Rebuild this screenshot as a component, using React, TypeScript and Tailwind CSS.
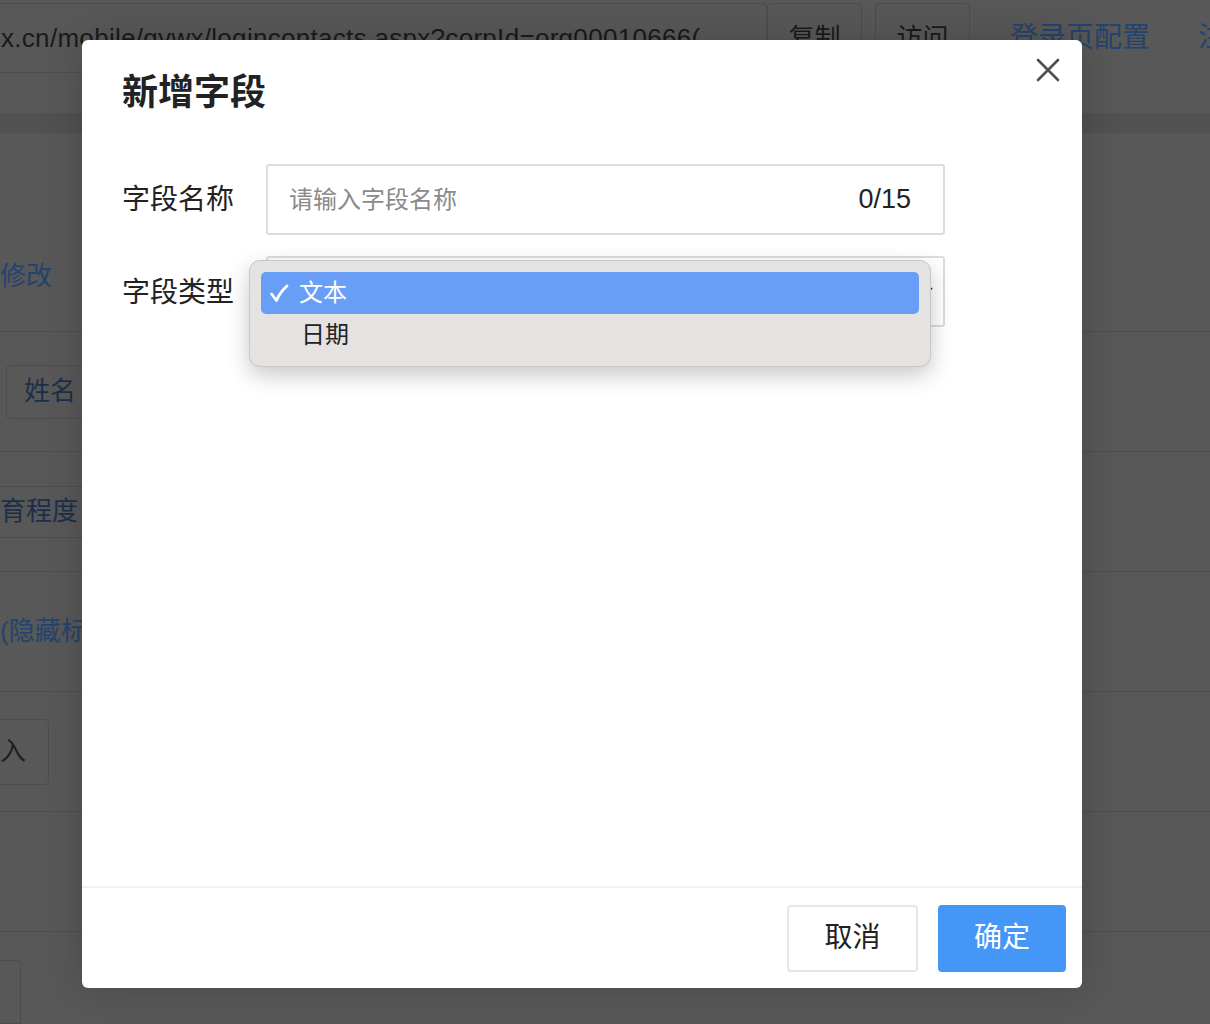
import React from "react";

const F = "font-['Liberation_Sans','Noto_Sans_CJK_SC',sans-serif]";

function BgRow({ h, children }: { h: string; children?: React.ReactNode }) {
  return <div className={`${h} border-b border-[#4f4f4f] flex items-center relative`}>{children}</div>;
}

export default function App() {
  return (
    <div className={`relative w-[1210px] h-[1024px] overflow-hidden bg-[#585858] ${F}`}>
      {/* underlying page */}
      <div className="flex flex-col">
        <div className="h-[73px] flex items-stretch pt-[3px]">
          <div className="shrink-0 w-[787px] -ml-[20px] border border-[#4d4d4d] rounded-[4px] flex items-center pl-[20px] text-[26px] tracking-[0.3px] text-[#1a1a1a] overflow-hidden whitespace-nowrap">
            x.cn/mobile/gywx/logincontacts.aspx?corpId=org00010666(
          </div>
          <div className="shrink-0 w-[95px] border border-[#4d4d4d] rounded-[4px] flex items-center justify-center text-[26px] text-[#1a1a1a]">复制</div>
          <div className="shrink-0 w-[95px] ml-[13px] border border-[#4d4d4d] rounded-[4px] flex items-center justify-center text-[26px] text-[#1a1a1a]">访问</div>
          <div className="shrink-0 ml-[40px] flex items-center text-[28px] text-[#24436e] whitespace-nowrap">登录页配置</div>
          <div className="shrink-0 ml-[48px] flex items-center text-[28px] text-[#24436e] whitespace-nowrap">注</div>
        </div>
        <div className="h-[40px]" />
        <div className="h-[20px] bg-[#515151]" />
        <BgRow h="h-[199px]">
          <span className="absolute left-0 top-[124px] text-[26px] text-[#24436e]">修改</span>
        </BgRow>
        <BgRow h="h-[120px]">
          <div className="ml-[6px] w-[120px] h-[54px] border border-[#4d4d4d] rounded-[4px] flex items-center pl-[17px] text-[26px] text-[#1c2f4a]">姓名</div>
        </BgRow>
        <BgRow h="h-[120px]">
          <div className="w-[83px] h-[52px] border border-[#4d4d4d] border-l-0 rounded-r-[4px] flex items-center text-[26px] text-[#1c2f4a] whitespace-nowrap">育程度</div>
        </BgRow>
        <BgRow h="h-[120px]">
          <span className="text-[26px] text-[#24436e] whitespace-nowrap">(隐藏标签</span>
        </BgRow>
        <BgRow h="h-[120px]">
          <div className="w-[49px] h-[66px] border border-[#4d4d4d] border-l-0 rounded-r-[4px] flex items-center pl-[0px] text-[26px] text-[#1f1f1f]">入</div>
        </BgRow>
        <BgRow h="h-[120px]" />
        <div className="h-[92px] flex items-end">
          <div className="w-[21px] h-[64px] border border-[#4d4d4d] border-l-0 rounded-tr-[4px]" />
        </div>
      </div>

      {/* modal */}
      <div className="absolute left-[82px] top-[40px] w-[1000px] h-[948px] bg-white rounded-[6px] shadow-[0_0_40px_rgba(0,0,0,0.18)] flex flex-col">
        <button className="absolute right-[22px] top-[18px] w-[24px] h-[24px]">
          <svg viewBox="0 0 24 24" width="24" height="24">
            <path d="M2 2 L22 22 M22 2 L2 22" stroke="#4f4f4f" strokeWidth="2.6" strokeLinecap="round" />
          </svg>
        </button>
        <div className="pt-[30px] pl-[40px] text-[36px] leading-[46px] font-semibold text-[#222]">新增字段</div>
        <div className="flex-1 pl-[40px] pt-[48px] flex flex-col gap-[21px]">
          <div className="flex items-center">
            <div className="w-[144px] text-[28px] text-[#222]">字段名称</div>
            <div className="w-[679px] h-[71px] border-2 border-[#dcdcdc] rounded-[3px] flex items-center justify-between pl-[21px] pr-[32px]">
              <span className="text-[24px] text-[#8a8a8a]">请输入字段名称</span>
              <span className="text-[27px] text-[#222]">0/15</span>
            </div>
          </div>
          <div className="flex items-center">
            <div className="w-[144px] text-[28px] text-[#222] pt-[2px]">字段类型</div>
            <div className="relative w-[679px] h-[71px] border-2 border-[#dcdcdc] rounded-[3px]">
              <svg className="absolute right-[10px] top-[26px]" width="14" height="14" viewBox="0 0 14 14">
                <path d="M1 4 L7 10 L13 4" stroke="#222" strokeWidth="1.6" fill="none" />
              </svg>
              <div className="absolute -left-[19px] top-[2px] w-[682px] h-[107px] bg-[#e5e3e1] border border-[#c9c7c5] rounded-[11px] shadow-[0_8px_22px_rgba(0,0,0,0.22)] p-[11px] pb-[9px] flex flex-col">
                <div className="h-[42px] bg-[#699ef6] rounded-[5px] flex items-center pl-[8px] text-white">
                  <svg width="20" height="20" viewBox="0 0 20 20">
                    <path d="M2.5 11 L7.5 17.5 Q11 9 18 3" stroke="#fff" strokeWidth="2.8" fill="none" strokeLinecap="round" strokeLinejoin="round" />
                  </svg>
                  <span className="ml-[10px] text-[24px] leading-none">文本</span>
                </div>
                <div className="h-[44px] flex items-center pl-[40px] text-[24px] text-[#222]">日期</div>
              </div>
            </div>
          </div>
        </div>
        <div className="h-[102px] border-t-2 border-[#f2f2f2] flex items-center justify-end pr-[16px] gap-[20px]">
          <button className="w-[131px] h-[67px] border-2 border-[#e6e6e6] rounded-[4px] text-[28px] text-[#222] bg-white">取消</button>
          <button className="w-[128px] h-[67px] rounded-[4px] text-[28px] text-white bg-[#4496f7]">确定</button>
        </div>
      </div>
    </div>
  );
}
